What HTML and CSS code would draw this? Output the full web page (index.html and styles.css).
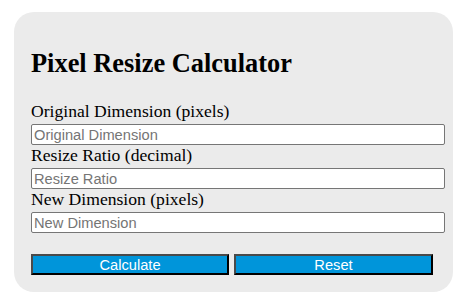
FILE: index.html
```html
<!DOCTYPE html>
<html lang="en">
<head>
    <meta charset="UTF-8">
    <meta name="viewport" content="width=device-width, initial-scale=1.0">
    <title>Pixel Resize Calculator</title>
    <link rel="stylesheet" href="styles.css">
</head>
<body>
    <div class="calculator">
        <h2>Pixel Resize Calculator</h2>

        <label for="original">Original Dimension (pixels)</label>
        <input type="number" id="original" placeholder="Original Dimension">

        <label for="ratio">Resize Ratio (decimal)</label>
        <input type="number" id="ratio" placeholder="Resize Ratio">

        <label for="result">New Dimension (pixels)</label>
        <input type="number" id="result" placeholder="New Dimension">

        <div class="buttons">
            <button class="calc-button" onclick="calculate()">Calculate</button>
            <button class="calc-button reset" onclick="resetForm()">Reset</button>
        </div>
    </div>

    <script>
        function calculate() {
            const original = parseFloat(document.getElementById('original').value);
            const ratio = parseFloat(document.getElementById('ratio').value);
            if (!isNaN(original) && !isNaN(ratio)) {
                document.getElementById('result').value = (original * ratio).toFixed(2);
            }
        }

        function resetForm() {
            document.getElementById('original').value = '';
            document.getElementById('ratio').value = '';
            document.getElementById('result').value = '';
        }
    </script>
</body>
</html>
```

FILE: styles.css
```css
body {
    margin: 0;
    background-color: #FFF;
    font-family: 'Liberation Serif', 'Times New Roman', serif;
}
.calculator {
    width: 405px;
    margin: 12px 0 0 14px;
    padding: 17px;
    background-color: #EBEBEB;
    border-radius: 20px;
}
h2 {
    font-size: 26.4px;
    line-height: 29px;
    font-weight: bold;
    color: #000;
    margin: 20px 0 23px;
}
label {
    display: block;
    font-size: 17.6px;
    line-height: 20px;
    color: #000;
}
input {
    display: block;
    box-sizing: border-box;
    width: 414px;
    height: 21px;
    margin: 3px 0 0;
    padding: 1px 2px;
    font-family: 'Liberation Sans', Arial, sans-serif;
    font-size: 14.67px;
    border: 1px solid #767676;
    border-radius: 2px;
    background-color: #FFF;
}
input::placeholder {
    color: #757575;
}
input::-webkit-outer-spin-button,
input::-webkit-inner-spin-button {
    -webkit-appearance: none;
    margin: 0;
}
.buttons {
    display: flex;
    gap: 5px;
    margin-top: 21px;
}
.calc-button {
    width: 198px;
    height: 21px;
    padding: 0;
    background-color: #0095DA;
    color: #FFF;
    font-family: 'Liberation Sans', Arial, sans-serif;
    font-size: 14.67px;
    border: 2px solid;
    border-color: #4A4A4A #000 #000 #4A4A4A;
    cursor: pointer;
}
.calc-button.reset {
    width: 199px;
}
```
